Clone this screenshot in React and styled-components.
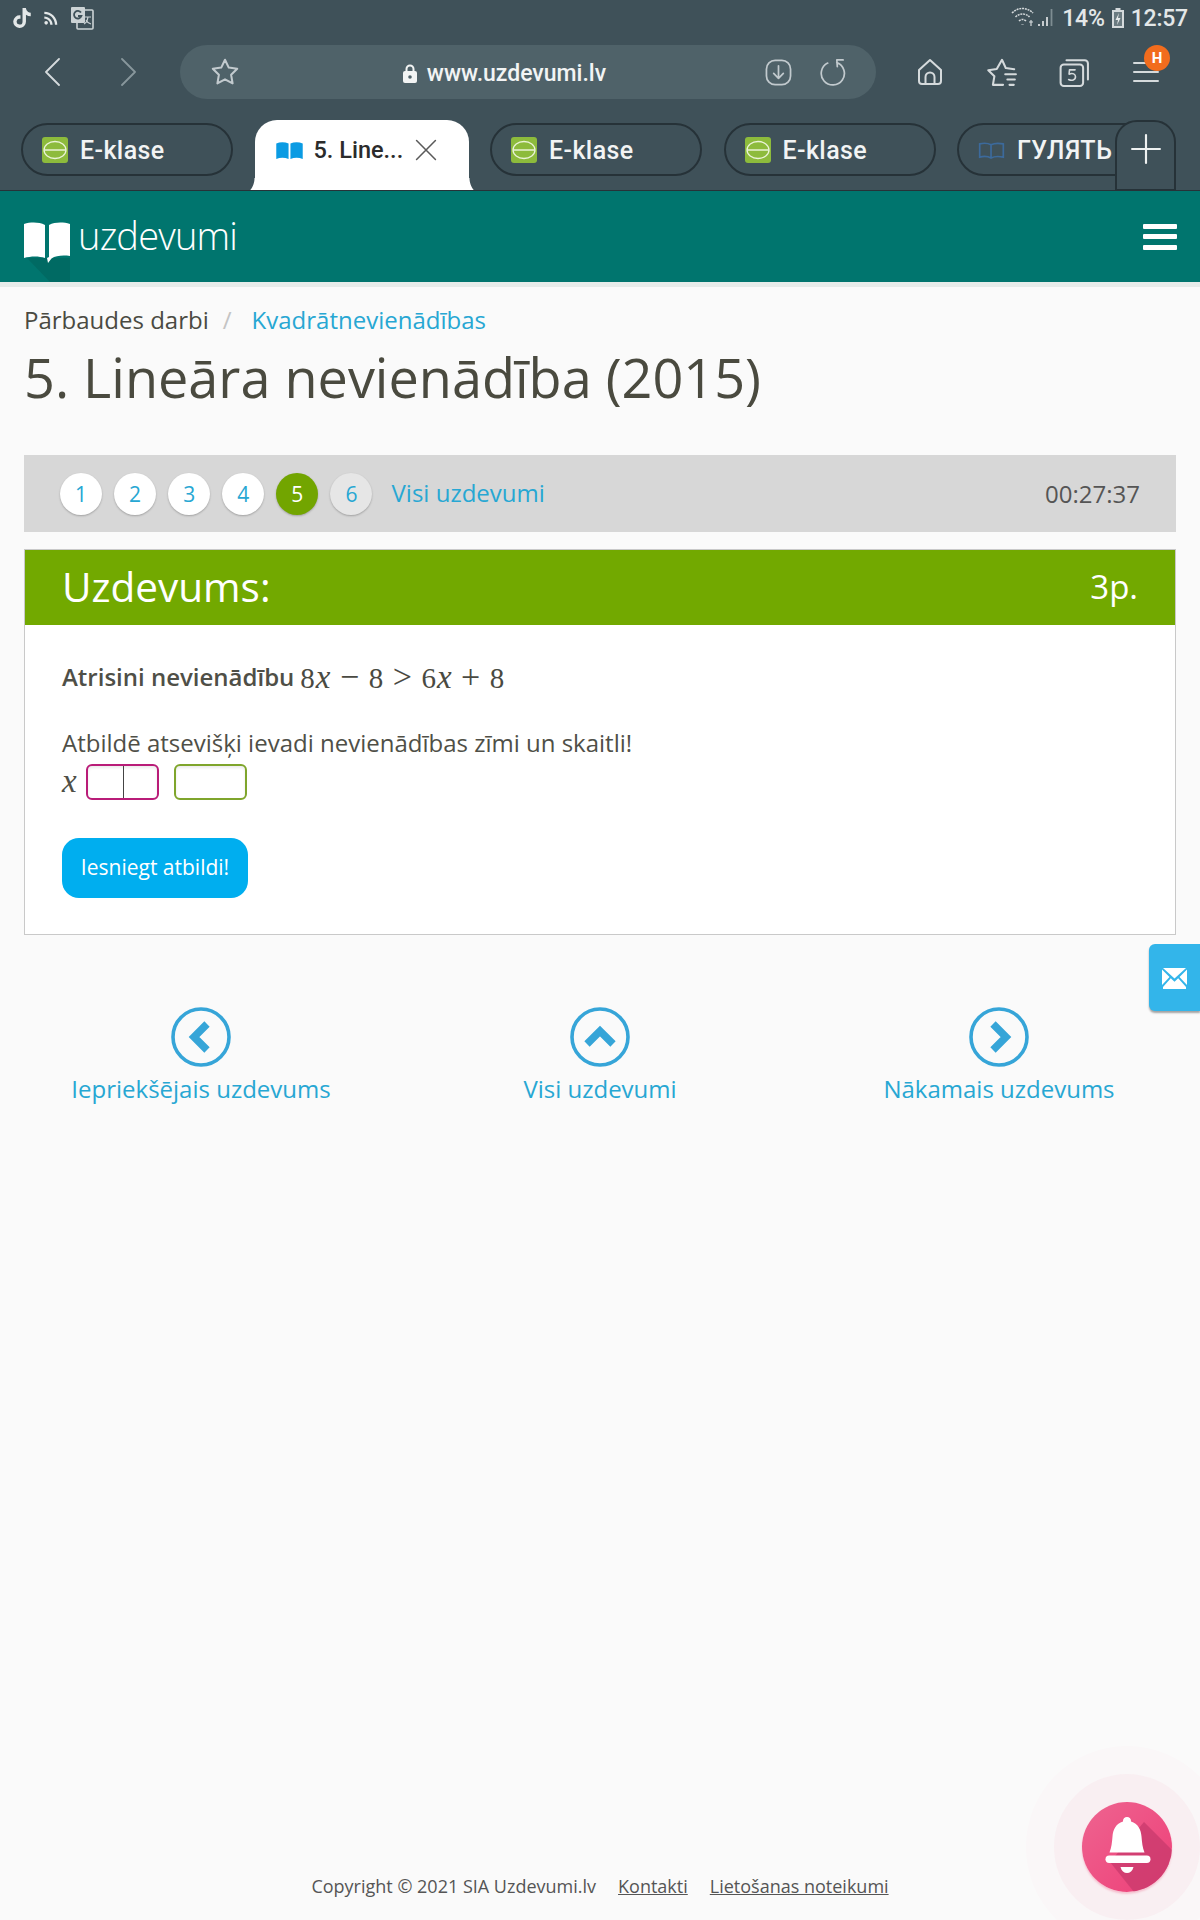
import React from "react";
import styled, { createGlobalStyle } from "styled-components";
import { FaTiktok } from "react-icons/fa";
import { MdRssFeed } from "react-icons/md";

const Global = createGlobalStyle`
  html, body { margin: 0; padding: 0; background: #fafafa; }
  * { box-sizing: border-box; }
  body { font-family: "Open Sans", "Liberation Sans", sans-serif; color: #4a4a42; }
`;

const Page = styled.div`
  position: relative;
  width: 1200px;
  min-height: 1920px;
  display: flex;
  flex-direction: column;
  overflow: hidden;
`;

/* browser chrome */
const Chrome = styled.div`
  background: #3f5159;
  height: 191px;
  font-family: Roboto, "Liberation Sans", sans-serif;
  display: flex;
  flex-direction: column;
`;
const StatusBar = styled.div`
  height: 36px;
  padding: 0 12px;
  display: flex;
  align-items: center;
  justify-content: space-between;
  color: #e3e7e8;
`;
const StatusGroup = styled.div`
  display: flex;
  align-items: center;
  gap: ${({ $gap }) => $gap || 8}px;
`;
const StatusText = styled.span`
  font-size: 23px;
  font-weight: 500;
  letter-spacing: -0.2px;
`;
const Toolbar = styled.div`
  height: 72px;
  padding-left: 15px;
  display: flex;
  align-items: center;
`;
const NavBtn = styled.div`
  width: 75px;
  display: flex;
  justify-content: center;
  color: ${({ $dim }) => ($dim ? "#88979c" : "#d5dadc")};
`;
const UrlPill = styled.div`
  width: 696px;
  height: 54px;
  margin-left: 15px;
  margin-right: 18px;
  padding: 0 30px;
  border-radius: 27px;
  background: #4f6269;
  display: flex;
  align-items: center;
  color: #c2cace;
`;
const Address = styled.div`
  flex: 1;
  padding: 2px 0 0 4px;
  display: flex;
  justify-content: center;
  align-items: center;
  gap: 10px;
  color: #f2f4f4;
  font-size: 23px;
  font-weight: 500;
`;
const PillIcons = styled.div`
  display: flex;
  align-items: center;
  gap: 27px;
`;
const ToolBtn = styled.div`
  position: relative;
  width: 72px;
  display: flex;
  justify-content: center;
  color: #d5dadc;
`;
const Badge = styled.span`
  position: absolute;
  top: -13px;
  left: 34px;
  width: 26px;
  height: 26px;
  border-radius: 50%;
  background: #f26c1d;
  color: #fff;
  font-size: 15px;
  font-weight: 700;
  display: flex;
  align-items: center;
  justify-content: center;
`;
const TabStrip = styled.div`
  position: relative;
  height: 83px;
  padding: 12px 0 0 21px;
  display: flex;
  align-items: flex-start;
  gap: 21.5px;
  overflow: hidden;
  border-bottom: 1px solid #263238;
`;
const Tab = styled.div`
  flex: none;
  width: 212px;
  height: 53px;
  margin-top: 3px;
  padding: 1px 0 0 19px;
  border: 2px solid #263238;
  border-radius: 27px;
  display: flex;
  align-items: center;
  gap: 12px;
  color: #f2f4f4;
  font-size: 25px;
  letter-spacing: 0.4px;
  font-weight: 500;
  white-space: nowrap;
  overflow: hidden;
`;
const ActiveTab = styled.div`
  flex: none;
  position: relative;
  z-index: 1;
  width: 214px;
  height: 72px;
  padding: 0 0 12px 21px;
  border-radius: 22px 22px 0 0;
  background: #fff;
  color: #2b2b2b;
  font-size: 23.5px;
  font-weight: 500;
  display: flex;
  align-items: center;
  gap: 11px;
  &::before, &::after {
    content: "";
    position: absolute;
    bottom: 0;
    width: 20px;
    height: 14px;
  }
  &::before { left: -20px; background: radial-gradient(circle at 0 0, transparent 19px, #fff 20px); }
  &::after { right: -20px; background: radial-gradient(circle at 100% 0, transparent 19px, #fff 20px); }
`;
const TabClose = styled.span`
  display: flex;
  color: #5a5a5a;
`;
const PlusTab = styled.div`
  position: absolute;
  z-index: 2;
  top: 12px;
  left: 1115px;
  width: 61px;
  height: 71px;
  padding-bottom: 14px;
  border: 2px solid #263238;
  border-radius: 22px 22px 0 0;
  background: #3f5159;
  color: #eef1f1;
  display: flex;
  align-items: center;
  justify-content: center;
`;

/* site header */
const SiteHeader = styled.header`
  height: 91px;
  padding: 0 23px 0 24px;
  background: #00756e;
  box-shadow: 0 5px 0 #e6ecea;
  display: flex;
  align-items: center;
  justify-content: space-between;
`;
const Logo = styled.div`
  display: flex;
  align-items: center;
  gap: 8px;
  color: #fff;
  font-size: 38px;
  font-weight: 300;
  letter-spacing: -0.8px;
`;
const LogoText = styled.span`
  padding-bottom: 4px;
`;
const Burger = styled.div`
  width: 34px;
  display: flex;
  flex-direction: column;
  gap: 5.5px;
  & > span { height: 5px; background: #fff; border-radius: 1px; }
`;

/* content */
const Content = styled.main`
  padding: 21px 24px 0;
`;
const Breadcrumb = styled.div`
  display: flex;
  align-items: center;
  height: 32px;
  font-size: 24px;
  color: #4a4a42;
`;
const CrumbSep = styled.span`
  margin: 0 20px 0 14px;
  color: #c4c4c4;
`;
const Link = styled.a`
  color: #27a7d3;
  text-decoration: none;
`;
const Title = styled.h1`
  margin: 9px 0 45px;
  height: 66px;
  font-size: 54px;
  line-height: 66px;
  font-weight: 400;
  color: #4a4a3f;
`;
const Pager = styled.div`
  height: 77px;
  padding: 0 36px;
  background: #d7d7d7;
  display: flex;
  align-items: center;
  gap: 12.1px;
  font-size: 24px;
`;
const PageDot = styled.span`
  width: 42px;
  height: 42px;
  border-radius: 50%;
  background: ${({ $state }) => ($state === "active" ? "#72a500" : $state === "todo" ? "#e6e6e6" : "#fff")};
  color: ${({ $state }) => ($state === "active" ? "#fff" : "#27a7d3")};
  box-shadow: 0 1px 2px rgba(0, 0, 0, 0.25);
  font-size: 21px;
  display: flex;
  align-items: center;
  justify-content: center;
`;
const PagerLink = styled(Link)`
  margin-left: 7px;
  padding-bottom: 2px;
`;
const Timer = styled.span`
  margin-left: auto;
  padding-bottom: 1px;
  font-size: 24px;
  color: #555;
`;
const Card = styled.section`
  margin-top: 17px;
  background: #fff;
  border: 1px solid #c9c9c9;
`;
const CardHead = styled.div`
  height: 75px;
  padding: 0 37px 2px;
  background: #72a900;
  color: #fff;
  font-size: 40.5px;
  display: flex;
  align-items: center;
  justify-content: space-between;
`;
const Score = styled.span`
  font-size: 33px;
`;
const CardBody = styled.div`
  padding: 35px 37px 36px;
  font-size: 24px;
  color: #4f4f47;
`;
const Line = styled.div`
  height: 34px;
  line-height: 34px;
  margin-top: ${({ $top }) => $top || 0}px;
  display: flex;
  align-items: center;
  white-space: pre;
`;
const Strong = styled.strong`
  font-weight: 600;
`;
const Formula = styled.span`
  margin-left: 6px;
  font-family: "Liberation Serif", serif;
  font-size: 29px;
  color: #4a4a42;
  & i { font-size: 33px; margin-left: 1px; }
`;
const Op = styled.span`
  margin: 0 9.5px;
  font-size: 34px;
`;
const AnswerRow = styled.div`
  margin-top: 4px;
  display: flex;
  align-items: center;
`;
const MathX = styled.i`
  width: 24px;
  padding-bottom: 2px;
  font-family: "Liberation Serif", serif;
  font-size: 33px;
  line-height: 30px;
`;
const AnswerBox = styled.div`
  width: ${({ $w }) => $w}px;
  height: 36px;
  margin-right: 15px;
  border: 2px solid ${({ $color }) => $color};
  border-radius: 6px;
  background: #fff;
  box-shadow: inset 0 2px 3px rgba(0, 0, 0, 0.08);
  position: relative;
  ${({ $split }) => $split && `
    &::after {
      content: "";
      position: absolute;
      top: 0;
      bottom: 0;
      left: 35px;
      width: 1px;
      background: #444;
    }
  `}
`;
const SubmitButton = styled.button`
  display: block;
  width: 186px;
  height: 60px;
  margin-top: 38px;
  padding: 0 0 3px;
  border: 0;
  border-radius: 17px;
  background: #00aeef;
  color: #fff;
  font-family: inherit;
  font-size: 21px;
`;

/* prev / all / next */
const TaskNav = styled.nav`
  margin-top: 72px;
  display: grid;
  grid-template-columns: repeat(3, 399px);
  justify-content: center;
`;
const TaskLink = styled.a`
  display: flex;
  flex-direction: column;
  align-items: center;
  gap: 5px;
  color: #27a7d3;
  font-size: 24px;
  line-height: 34px;
`;

const Footer = styled.footer`
  margin-top: auto;
  padding: 0 0 20px;
  display: flex;
  justify-content: center;
  gap: 22px;
  font-size: 18px;
  line-height: 28px;
  color: #555;
`;
const FooterLink = styled.a`
  text-decoration: underline;
`;

/* floating */
const MailTab = styled.div`
  position: absolute;
  top: 944px;
  right: 0;
  width: 51px;
  height: 67px;
  padding-top: 2px;
  border-radius: 6px 0 0 6px;
  background: #33b5ea;
  box-shadow: 0 2px 2px rgba(0, 0, 0, 0.35);
  display: flex;
  align-items: center;
  justify-content: center;
`;
const BellWrap = styled.div`
  position: absolute;
  left: 1082px;
  top: 1802px;
  width: 90px;
  height: 90px;
  border-radius: 50%;
  box-shadow: 0 0 0 28px rgba(240, 90, 130, 0.05), 0 0 0 56px rgba(240, 90, 130, 0.015), 0 2px 2px rgba(240, 90, 130, 0.3);
`;

const Stroke = ({ size = 28, w = 2.2, children }) => (
  <svg width={size} height={size} viewBox="0 0 28 28" fill="none" stroke="currentColor" strokeWidth={w} strokeLinecap="round" strokeLinejoin="round">
    {children}
  </svg>
);

const StarPath = "M14 2.6l3.5 7.3 7.9 1.1-5.7 5.6 1.4 8-7.1-3.8-7.1 3.8 1.4-8-5.7-5.6 7.9-1.1z";

const TranslateIcon = () => (
  <svg width="24" height="24" viewBox="0 0 24 24">
    <rect x="7" y="4" width="16" height="19" rx="1" fill="#3f5159" stroke="#ccd3d5" strokeWidth="1.6" />
    <rect x="1" y="1" width="14" height="16" rx="1" fill="#ccd3d5" />
    <path d="M11 6.6A3.8 3.8 0 1 0 11.4 10H8" fill="none" stroke="#3f5159" strokeWidth="1.8" />
    <path d="M15 11h6M18 11c-.5 3.5-2 6-4 7M16 14c1 2 3 3.5 5 4" fill="none" stroke="#ccd3d5" strokeWidth="1.2" />
  </svg>
);

const WifiSignal = () => (
  <svg width="46" height="24" viewBox="0 0 46 24" fill="none" stroke="#d5dadc">
    <path d="M2 7c6-6 15-6 21 0M5.5 11c4-4 10-4 14 0M9 15c2-2 5-2 7 0" strokeWidth="1.5" strokeDasharray="2 .8" />
    <path d="M12.5 18.5v.5" strokeWidth="2.4" />
    <path d="M21 14v6M19 16h4" strokeWidth="1.2" />
    <path d="M29 20v-2M33 20v-5M37 20v-9" strokeWidth="1.8" />
    <path d="M41.5 20V3" strokeWidth="1.8" stroke="#7e8d92" />
  </svg>
);

const Battery = () => (
  <svg width="14" height="22" viewBox="0 0 14 22">
    <path d="M4.5 1h5v2h3.5v18H1V3h3.5z" fill="#d5dadc" />
    <path d="M3 5h8v14H3z" fill="#6b7b81" />
    <path d="M8 6L4.5 13h2.5l-1 5 3.5-7H7z" fill="#e8ecec" />
  </svg>
);

const BookFav = ({ outline }) => (
  <svg width="27" height="17" viewBox="0 0 28 18" style={{ flex: "none" }}>
    {outline ? (
      <path d="M1.5 2c4-1 8.5-1 12 1 3.5-2 8-2 13-1v14c-5-1-9.5-1-13 1-3.5-2-8-2-12-1zM13.5 3v14" fill="none" stroke="#3c6a9c" strokeWidth="1.8" />
    ) : (
      <path d="M0 1.5C4-.3 9-.3 13 1.5V18c-4-1.6-9-1.6-13 0zM15 1.5c4-1.8 9-1.8 13 0V18c-4-1.6-9-1.6-13 0z" fill="#0b9be3" />
    )}
  </svg>
);

const LeafFav = () => (
  <svg width="26" height="26" viewBox="0 0 26 26" style={{ flex: "none" }}>
    <rect width="26" height="26" rx="3" fill="#8dbb3c" />
    <ellipse cx="13" cy="13" rx="11" ry="8.5" fill="none" stroke="#eaf3d6" strokeWidth="1.3" />
    <path d="M2 13h22" stroke="#eaf3d6" strokeWidth="1.3" />
  </svg>
);

const LogoBook = () => (
  <svg width="46" height="60" viewBox="0 0 46 60" style={{ marginTop: 10, marginBottom: -20 }}>
    <path d="M3 36L46 36 46 60 26 60z" fill="#006a63" />
    <path d="M0 2c7-2 15-2 21 1v33c-6-2-14-2-21 0z" fill="#fff" />
    <path d="M25 3c6-3 14-3 21-1v32c-7-1-14-.5-18.5 2.5L24 41l-1-5 2-1z" fill="#fff" />
  </svg>
);

const Chevron = ({ d }) => (
  <svg width="60" height="60" viewBox="0 0 60 60" fill="none" stroke="#36a5d8">
    <circle cx="30" cy="30" r="28" strokeWidth="3.6" />
    <path d={d} strokeWidth="7.5" strokeLinejoin="miter" />
  </svg>
);

const BellBadge = () => (
  <svg width="90" height="90" viewBox="0 0 90 90" style={{ display: "block" }}>
    <defs>
      <linearGradient id="bellBg" x1="0" y1="0" x2="1" y2="1">
        <stop offset="0" stopColor="#ee6490" />
        <stop offset="1" stopColor="#ee3f78" />
      </linearGradient>
      <clipPath id="bellClip">
        <circle cx="45" cy="45" r="45" />
      </clipPath>
    </defs>
    <circle cx="45" cy="45" r="45" fill="url(#bellBg)" />
    <path d="M62 20L100 58 60 100 28 60z" fill="#c83a6c" opacity="0.75" clipPath="url(#bellClip)" />
    <path d="M45 15a4 4 0 0 1 4 4.5c7 2 10 8 10.5 15 .5 6 1 11 3 16H27.5c2-5 2.5-10 3-16 .5-7 3.5-13 10.5-15A4 4 0 0 1 45 15z" fill="#fff" />
    <rect x="23.5" y="53.5" width="45" height="7.5" rx="3.7" fill="#fff" />
    <path d="M38.5 65h13c-1 4-3.5 6-6.5 6s-5.5-2-6.5-6z" fill="#fff" />
  </svg>
);

export default function App() {
  return (
    <Page>
      <Global />
      <Chrome>
        <StatusBar>
          <StatusGroup $gap={9}>
            <FaTiktok size={20} />
            <MdRssFeed size={20} />
            <TranslateIcon />
          </StatusGroup>
          <StatusGroup $gap={6}>
            <WifiSignal />
            <StatusText>14%</StatusText>
            <Battery />
            <StatusText>12:57</StatusText>
          </StatusGroup>
        </StatusBar>
        <Toolbar>
          <NavBtn>
            <Stroke w={1.8}><path d="M20 1L7 14l13 13" /></Stroke>
          </NavBtn>
          <NavBtn $dim>
            <Stroke w={1.8}><path d="M8 1l13 13L8 27" /></Stroke>
          </NavBtn>
          <UrlPill>
            <Stroke size={30} w={1.9}><path d={StarPath} /></Stroke>
            <Address>
              <svg width="14" height="19" viewBox="0 0 14 19">
                <path d="M3.5 8V5a3.5 3.5 0 0 1 7 0v3" fill="none" stroke="#f2f4f4" strokeWidth="2" />
                <rect y="7" width="14" height="12" rx="2" fill="#f2f4f4" />
                <circle cx="7" cy="13" r="1.8" fill="#4f6269" />
              </svg>
              www.uzdevumi.lv
            </Address>
            <PillIcons>
              <Stroke size={27} w={1.8}>
                <rect x="1.5" y="1.5" width="25" height="25" rx="9" />
                <path d="M14 7v13M9 15l5 5 5-5" />
              </Stroke>
              <Stroke size={27} w={1.8}>
                <path d="M9 4.2a12 12 0 1 0 9.5-.5M18.5 1l.5 7M18.5 1H25" />
              </Stroke>
            </PillIcons>
          </UrlPill>
          <ToolBtn>
            <Stroke w={2}>
              <path d="M3 12L14 2l11 10v11a3 3 0 0 1-3 3H6a3 3 0 0 1-3-3z" />
              <path d="M9.5 26v-7a4.5 4.5 0 0 1 9 0v7" />
            </Stroke>
          </ToolBtn>
          <ToolBtn>
            <Stroke size={30} w={1.9}>
              <path d="M15 26H5.5l1.4-8-5.7-5.6 7.9-1.1L14 2.6l3.5 7.7 7.9 1.1" />
              <path d="M17 16h10M19 21h7M21 26h4" />
            </Stroke>
          </ToolBtn>
          <ToolBtn>
            <Stroke size={30} w={1.9}>
              <rect x="1.5" y="7" width="21" height="20" rx="3" />
              <path d="M7 3h17a3 3 0 0 1 3 3v15" />
              <path d="M15 12H9.8l-.4 4c3.5-1.5 6 0 6 2.5 0 3-3.5 4-6.4 2.5" strokeWidth="1.5" />
            </Stroke>
          </ToolBtn>
          <ToolBtn>
            <Stroke w={2}><path d="M2 5h24M2 14h24M2 23h24" /></Stroke>
            <Badge>H</Badge>
          </ToolBtn>
        </Toolbar>
        <TabStrip>
          <Tab><LeafFav />E-klase</Tab>
          <ActiveTab>
            <BookFav />
            5. Line...
            <TabClose>
              <Stroke size={24} w={1.8}><path d="M3 3l22 22M25 3L3 25" /></Stroke>
            </TabClose>
          </ActiveTab>
          <Tab><LeafFav />E-klase</Tab>
          <Tab><LeafFav />E-klase</Tab>
          <Tab><BookFav outline />ГУЛЯТЬ у</Tab>
          <PlusTab>
            <Stroke size={30} w={2}><path d="M14 1v26M1 14h26" /></Stroke>
          </PlusTab>
        </TabStrip>
      </Chrome>

      <SiteHeader>
        <Logo><LogoBook /><LogoText>uzdevumi</LogoText></Logo>
        <Burger><span /><span /><span /></Burger>
      </SiteHeader>

      <Content>
        <Breadcrumb>
          Pārbaudes darbi
          <CrumbSep>/</CrumbSep>
          <Link>Kvadrātnevienādības</Link>
        </Breadcrumb>
        <Title>5. Lineāra nevienādība (2015)</Title>
        <Pager>
          {[1, 2, 3, 4, 5, 6].map((n) => (
            <PageDot key={n} $state={n === 5 ? "active" : n === 6 ? "todo" : "done"}>{n}</PageDot>
          ))}
          <PagerLink>Visi uzdevumi</PagerLink>
          <Timer>00:27:37</Timer>
        </Pager>
        <Card>
          <CardHead>
            <span>Uzdevums:</span>
            <Score>3p.</Score>
          </CardHead>
          <CardBody>
            <Line>
              <Strong>Atrisini nevienādību</Strong>
              <Formula>8<i>x</i><Op>−</Op>8<Op>&gt;</Op>6<i>x</i><Op>+</Op>8</Formula>
            </Line>
            <Line $top={32}>Atbildē atsevišķi ievadi nevienādības zīmi un skaitli!</Line>
            <AnswerRow>
              <MathX>x</MathX>
              <AnswerBox $w={73} $color="#b91c78" $split />
              <AnswerBox $w={73} $color="#7fa52c" />
            </AnswerRow>
            <SubmitButton>Iesniegt atbildi!</SubmitButton>
          </CardBody>
        </Card>
      </Content>

      <TaskNav>
        <TaskLink>
          <Chevron d="M36 17L23 30l13 13" />
          Iepriekšējais uzdevums
        </TaskLink>
        <TaskLink>
          <Chevron d="M17 37l13-13 13 13" />
          Visi uzdevumi
        </TaskLink>
        <TaskLink>
          <Chevron d="M24 17l13 13-13 13" />
          Nākamais uzdevums
        </TaskLink>
      </TaskNav>

      <Footer>
        <span>Copyright © 2021 SIA Uzdevumi.lv</span>
        <FooterLink>Kontakti</FooterLink>
        <FooterLink>Lietošanas noteikumi</FooterLink>
      </Footer>

      <MailTab>
        <svg width="25" height="21" viewBox="0 0 25 21" fill="#fff">
          <path d="M1 0h23L12.5 10.5zM0 1.5l7.5 7.500L0 17zM25 1.5L17.5 9l7.500 8zM8.800 10.300l3.700 3.400 3.700-3.400 7.800 8.700V21H1v-2z" />
        </svg>
      </MailTab>
      <BellWrap><BellBadge /></BellWrap>
    </Page>
  );
}
